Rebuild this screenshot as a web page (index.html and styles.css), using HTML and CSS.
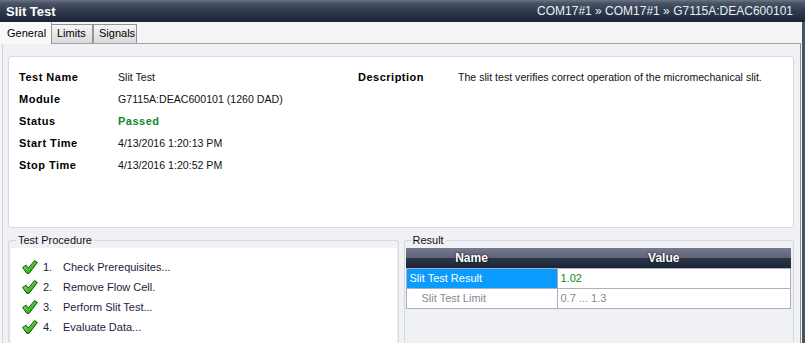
FILE: index.html
```html
<!DOCTYPE html>
<html lang="en">
<head>
    <meta charset="UTF-8">
    <title>Slit Test</title>
    <link rel="stylesheet" href="styles.css">
</head>
<body>
    <div class="titlebar">
        <span class="title">Slit Test</span>
        <span class="crumbs">COM17#1 &raquo; COM17#1 &raquo; G7115A:DEAC600101</span>
    </div>
    <div class="main">
        <div class="tabs">
            <div class="tab active">General</div>
            <div class="tab">Limits</div>
            <div class="tab">Signals</div>
        </div>
        <div class="page">
            <div class="info">
                <dl class="props">
                    <dt>Test Name</dt><dd>Slit Test</dd>
                    <dt>Module</dt><dd>G7115A:DEAC600101 (1260 DAD)</dd>
                    <dt>Status</dt><dd class="passed">Passed</dd>
                    <dt>Start Time</dt><dd>4/13/2016 1:20:13 PM</dd>
                    <dt>Stop Time</dt><dd>4/13/2016 1:20:52 PM</dd>
                </dl>
                <dl class="props desc">
                    <dt>Description</dt><dd>The slit test verifies correct operation of the micromechanical slit.</dd>
                </dl>
            </div>
            <div class="lower">
                <fieldset class="group">
                    <legend>Test Procedure</legend>
                    <ul class="steps">
                        <li><svg class="check" viewBox="0 0 16 14"><use href="#tick"/></svg><span>1.</span>Check Prerequisites...</li>
                        <li><svg class="check" viewBox="0 0 16 14"><use href="#tick"/></svg><span>2.</span>Remove Flow Cell.</li>
                        <li><svg class="check" viewBox="0 0 16 14"><use href="#tick"/></svg><span>3.</span>Perform Slit Test...</li>
                        <li><svg class="check" viewBox="0 0 16 14"><use href="#tick"/></svg><span>4.</span>Evaluate Data...</li>
                    </ul>
                </fieldset>
                <fieldset class="group result">
                    <legend>Result</legend>
                    <table>
                        <tr><th class="col-name">Name</th><th>Value</th></tr>
                        <tr><td class="selected">Slit Test Result</td><td class="good">1.02</td></tr>
                        <tr class="sub"><td class="indent">Slit Test Limit</td><td>0.7 ... 1.3</td></tr>
                    </table>
                </fieldset>
            </div>
        </div>
    </div>

    <svg width="0" height="0" class="defs">
        <defs>
            <linearGradient id="tickfill" x1="0" y1="0" x2="1" y2="1">
                <stop offset="0" stop-color="#a6f27a"/>
                <stop offset="0.5" stop-color="#4cc82e"/>
                <stop offset="1" stop-color="#1a8a10"/>
            </linearGradient>
            <symbol id="tick" viewBox="0 0 16 14">
                <path d="M0.6 7.4 L4.2 5.2 L6.2 8.2 L12.6 0.6 L15.4 2.4 L7.2 13.2 L4.8 13.4 Z" fill="url(#tickfill)" stroke="#1b4a14" stroke-width="1" stroke-linejoin="round"/>
            </symbol>
        </defs>
    </svg>
</body>
</html>
```

FILE: styles.css
```css
* {
    margin: 0;
    padding: 0;
    box-sizing: border-box;
}

body {
    width: 805px;
    height: 343px;
    overflow: hidden;
    font-family: "Liberation Sans", Arial, sans-serif;
    font-size: 10.6px;
    color: #000;
    background: #f4f4f4;
}

.defs {
    position: absolute;
}

.titlebar {
    height: 22px;
    display: flex;
    align-items: center;
    justify-content: space-between;
    padding: 0 12px 0 6px;
    background: linear-gradient(#6c7384 0, #4b5468 3px, #2f3c4e 11px, #1a2636 100%);
    color: #fff;
}

.title {
    font-size: 13px;
    font-weight: bold;
}

.crumbs {
    font-size: 12px;
    color: #e8eef5;
}

.main {
    height: 321px;
    border-right: 3px solid #4a5365;
    display: flex;
    flex-direction: column;
}

.tabs {
    height: 21px;
    display: flex;
    align-items: flex-end;
}

.tab {
    height: 19px;
    line-height: 17px;
    padding: 0 5px;
    border: 1px solid #939393;
    border-bottom: none;
    background: linear-gradient(#f6f6f6, #d9d9d9);
    font-size: 11px;
}

.tab.active {
    height: 22px;
    line-height: 20px;
    width: 52px;
    padding: 0 0 0 6px;
    border-color: #fafafa #939393 #fafafa #fafafa;
    background: #f9f9f9;
    position: relative;
    margin-bottom: -1px;
}

.tab:nth-child(2) {
    width: 41px;
    border-left: none;
}

.tab:nth-child(3) {
    width: 44px;
}

.page {
    flex: 1;
    margin: 0 1px 0 2px;
    padding: 12px 6px 0 5px;
    border-top: 1px solid #a3a3a3;
    border-left: 1px solid #cfd3da;
    border-right: 1px solid #8b8f97;
    background: #eff1f5;
    display: flex;
    flex-direction: column;
}

.info {
    height: 172px;
    background: #fff;
    border: 1px solid #d4d9e2;
    border-radius: 3px;
    padding: 9px 0 0 10px;
    display: flex;
}

.props {
    width: 339px;
    display: grid;
    grid-template-columns: 99px auto;
    grid-auto-rows: 22px;
    align-items: center;
    align-content: start;
}

.props dt {
    font-weight: bold;
    font-size: 11px;
    letter-spacing: 0.5px;
}

.props dd {
    color: #111;
}

.props dd.passed {
    color: #12882a;
    font-weight: bold;
    font-size: 11px;
    letter-spacing: 0.5px;
}

.props.desc {
    width: auto;
    grid-template-columns: 100px auto;
}

.lower {
    flex: 1;
    display: flex;
    gap: 5px;
    margin-top: 6px;
}

.group {
    flex: 1;
    min-width: 0;
    border: 1px solid #d3d8e0;
    border-radius: 3px;
    border-bottom: none;
    padding: 1px 1px 0 2px;
    display: flex;
    flex-direction: column;
}

.group legend {
    margin-left: 5px;
    padding: 0 2px;
    font-size: 11px;
    line-height: 13px;
    color: #101010;
}

.steps {
    list-style: none;
    flex: 1;
    background: #fff;
    padding: 9px 0 0 11px;
}

.steps li {
    height: 20px;
    display: flex;
    align-items: center;
    font-size: 11px;
    color: #1c1c3c;
}

.check {
    width: 16px;
    height: 14px;
    margin-right: 5px;
}

.steps span {
    width: 20px;
}

.result {
    padding: 1px 2px 0 1px;
}

table {
    width: 100%;
    border-collapse: collapse;
    font-size: 11px;
}

th {
    height: 20px;
    padding-right: 20px;
    color: #fff;
    font-size: 12px;
    font-weight: bold;
    text-shadow: 0 0 2px #000;
    background: linear-gradient(#767a8f 0, #5f6378 50%, #2c3646 50%, #1b2535 100%);
}

th.col-name {
    width: 151px;
}

td {
    height: 20px;
    padding: 0 3px;
    border: 1px solid #aab0c2;
    background: #fff;
}

td.selected {
    background: #0a9bff;
    color: #fff;
}

td.good {
    color: #0a8a14;
}

.sub td {
    color: #8a8a8a;
}

td.indent {
    padding-left: 15px;
}
```
